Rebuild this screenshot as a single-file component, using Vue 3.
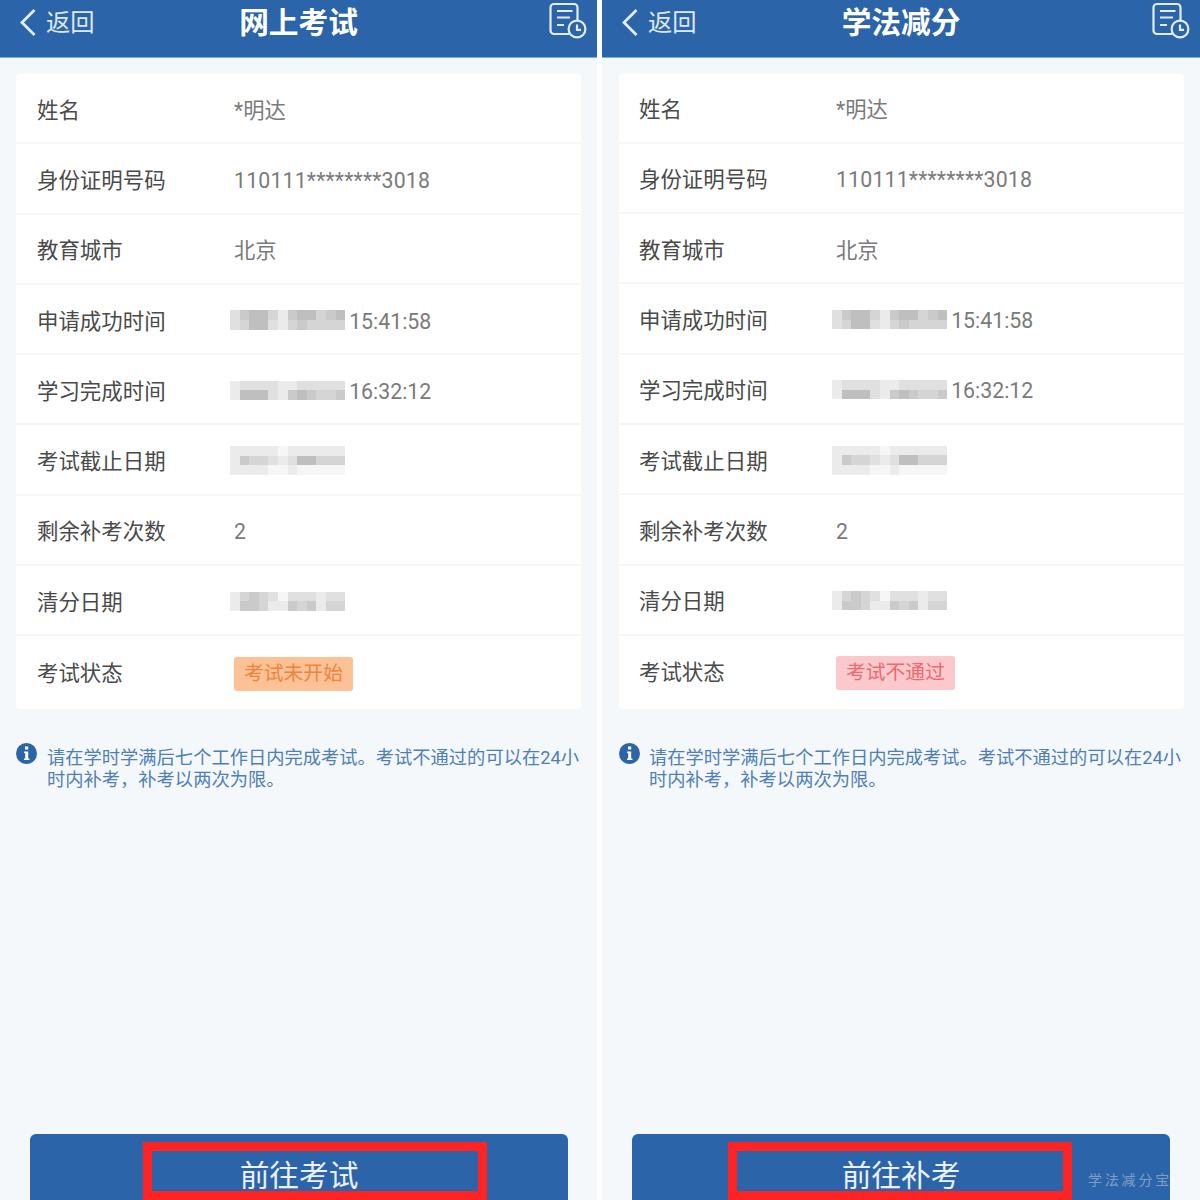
<template>
  <div class="page">
    <section v-for="p in panels" :key="p.title" class="panel" :class="p.cls">
      <header class="topbar">
        <div class="back">
          <svg class="chevron" width="18" height="30" viewBox="0 0 18 30">
            <path d="M15.5 2 L3 14.5 L15.5 27" fill="none" stroke="#e3edf6" stroke-width="2.8" />
          </svg>
          <span>返回</span>
        </div>
        <h1 class="title">{{ p.title }}</h1>
        <svg class="record" width="40" height="40" viewBox="0 0 40 40">
          <path d="M21 32 H6 a3.5 3.5 0 0 1 -3.5 -3.5 V5.5 a3.5 3.5 0 0 1 3.5 -3.5 H26 a3.5 3.5 0 0 1 3.5 3.5 V18" fill="none" stroke="#e3edf6" stroke-width="2.2" />
          <path d="M9 9 H24.5 M9 15.5 H22 M9 23 H16" fill="none" stroke="#e3edf6" stroke-width="2.2" />
          <circle cx="29" cy="27" r="8.4" fill="#2b64a8" stroke="#e3edf6" stroke-width="2.2" />
          <path d="M29 22.5 V27.8 H33" fill="none" stroke="#e3edf6" stroke-width="2.2" />
        </svg>
      </header>

      <div class="card">
        <div v-for="row in p.rows" :key="row.label" class="row">
          <span class="label">{{ row.label }}</span>
          <div class="value">
            <span v-if="row.mosaic" class="mosaic">
              <i v-for="(c, i) in row.mosaic.flat()" :key="i" :style="{ background: shade(c) }"></i>
            </span>
            <span v-if="row.text" :class="[row.cls, { after: row.mosaic }]">{{ row.text }}</span>
            <span v-if="row.badge" class="badge" :class="row.badge">{{ p.status }}</span>
          </div>
        </div>
      </div>

      <div class="tip">
        <svg class="info" width="21" height="21" viewBox="0 0 21 21">
          <circle cx="10.5" cy="10.5" r="10.5" fill="#2b64a8" />
          <rect x="9" y="3.5" width="3.2" height="3" fill="#fff" />
          <path d="M8 8.5 H12.2 V15.5 H13.4 V17 H8 V15.5 H9.2 V10 H8 Z" fill="#fff" />
        </svg>
        <p>请在学时学满后七个工作日内完成考试。考试不通过的可以在24小时内补考，补考以两次为限。</p>
      </div>

      <div class="spacer"></div>

      <button class="go">
        {{ p.action }}
        <span class="frame"></span>
      </button>
    </section>
    <span class="watermark">学法减分宝</span>
  </div>
</template>

<script setup>
// 马赛克灰度，0 为最浅，数字越大越深
const applyMosaic = [
  [2, 4, 5, 5, 3, 1, 4, 5, 5, 3, 4, 5],
  [2, 3, 5, 5, 2, 1, 3, 4, 3, 3, 3, 3]
]
const finishMosaic = [
  [1, 2, 2, 2, 2, 1, 1, 2, 2, 2, 2, 2],
  [1, 5, 5, 5, 2, 1, 4, 5, 4, 3, 3, 4]
]
const deadlineMosaic = [
  [1, 1, 1, 1, 1, 0, 1, 1, 1, 1, 1, 1],
  [1, 4, 3, 3, 2, 1, 2, 5, 5, 3, 3, 3],
  [1, 1, 1, 1, 0, 0, 1, 0, 0, 0, 0, 0]
]
const clearMosaic = [
  [1, 3, 4, 3, 2, 0, 2, 2, 2, 1, 2, 2],
  [1, 4, 4, 3, 1, 1, 4, 3, 4, 1, 3, 3]
]

const makeRows = () => [
  { label: '姓名', text: '*明达' },
  { label: '身份证明号码', text: '110111********3018', cls: 'digits id' },
  { label: '教育城市', text: '北京' },
  { label: '申请成功时间', mosaic: applyMosaic, text: '15:41:58', cls: 'digits' },
  { label: '学习完成时间', mosaic: finishMosaic, text: '16:32:12', cls: 'digits' },
  { label: '考试截止日期', mosaic: deadlineMosaic },
  { label: '剩余补考次数', text: '2', cls: 'digits' },
  { label: '清分日期', mosaic: clearMosaic },
  { label: '考试状态' }
]

const withBadge = (rows, badge) =>
  rows.map((r) => (r.label === '考试状态' ? { ...r, badge } : r))

const panels = [
  { title: '网上考试', action: '前往考试', status: '考试未开始', cls: 'left', rows: withBadge(makeRows(), 'orange') },
  { title: '学法减分', action: '前往补考', status: '考试不通过', cls: 'right', rows: withBadge(makeRows(), 'red') }
]

const shade = (level) => {
  const v = 246 - level * 11
  return `rgb(${v}, ${v}, ${v})`
}
</script>

<style>
html,
body {
  margin: 0;
  background: #fff;
}
</style>

<style scoped>
.page {
  position: relative;
  display: flex;
  justify-content: space-between;
  width: 1200px;
  height: 1200px;
  overflow: hidden;
  background: #fff;
  font-family: Roboto, "Noto Sans CJK SC", sans-serif;
}

.panel {
  display: flex;
  flex-direction: column;
  width: 597px;
  height: 1200px;
  background: #f4f8fa;
}

.panel.right {
  width: 598px;
}

.topbar {
  position: relative;
  display: flex;
  align-items: center;
  justify-content: center;
  flex: none;
  height: 57px;
  background: #2b64a8;
  border-bottom: 1px solid #7fb0d6;
}

.back {
  position: absolute;
  left: 19px;
  top: 7px;
  display: flex;
  align-items: center;
  gap: 9px;
  color: #dfe9f3;
  font-size: 24.3px;
  line-height: 30px;
}

.back span {
  margin-top: 1px;
}

.title {
  margin: 0 0 12px;
  color: #fff;
  font-size: 29.7px;
  font-weight: 700;
  line-height: 40px;
}

.record {
  position: absolute;
  right: 9px;
  top: 2px;
}

.card {
  display: flex;
  flex-direction: column;
  margin: 16px 16px 0;
  background: #fff;
  border-radius: 4px;
}

.right .card {
  margin: 15.5px 16px 0 17px;
}

.row {
  display: flex;
  align-items: center;
  height: 68.3px;
  padding-left: 21px;
  border-bottom: 2px solid #f4f6f8;
}

.right .row {
  padding-left: 20px;
}

.row:last-child {
  border-bottom: none;
  height: 70px;
  padding-bottom: 3px;
}

.label {
  width: 197px;
  flex: none;
  color: #4a4a4a;
  font-size: 21.45px;
}

.value {
  display: flex;
  align-items: center;
  color: #7a7a7a;
  font-size: 21.3px;
}

.digits {
  margin-top: 4px;
}

.id {
  letter-spacing: 0.17px;
}

.mosaic {
  display: grid;
  grid-template-columns: repeat(12, 9.6px);
  grid-auto-rows: 9.6px;
  margin-top: 2px;
  margin-left: -4px;
}

.after {
  margin-left: 4px;
}

.badge {
  margin-top: 5px;
  padding: 0 10px;
  border-radius: 3px;
  font-size: 19.8px;
  line-height: 34px;
}

.badge.orange {
  background: #fdc196;
  color: #ec8440;
}

.badge.red {
  background: #fbc9cc;
  color: #ec6a70;
}

.tip {
  display: flex;
  gap: 10px;
  margin: 33px 16px 0;
}

.right .tip {
  margin-left: 17px;
  gap: 9px;
}

.info {
  flex: none;
  margin-top: 1px;
}

.tip p {
  margin: 5px -3px 0 0;
  color: #4f7fb5;
  font-size: 18.28px;
  line-height: 22px;
}

.spacer {
  flex: 1;
}

.go {
  position: relative;
  flex: none;
  align-self: center;
  width: 538px;
  height: 66px;
  margin-left: 1px;
  padding: 7px 0 0;
  border: none;
  border-radius: 6px 6px 0 0;
  background: #2b64a8;
  color: #eaf1f8;
  font-family: inherit;
  font-size: 29.7px;
  line-height: 70px;
  text-align: center;
  box-sizing: border-box;
  vertical-align: top;
}

.right .go {
  margin-left: 0;
}

.frame {
  position: absolute;
  top: 8px;
  left: 113px;
  width: 326px;
  height: 40px;
  border: 9px solid #ff2424;
}

.right .frame {
  left: 96px;
}

.watermark {
  position: absolute;
  left: 1088px;
  top: 1169px;
  color: rgba(175, 195, 210, 0.65);
  font-family: "Noto Sans CJK SC", sans-serif;
  font-size: 14px;
  letter-spacing: 2.8px;
}
</style>
